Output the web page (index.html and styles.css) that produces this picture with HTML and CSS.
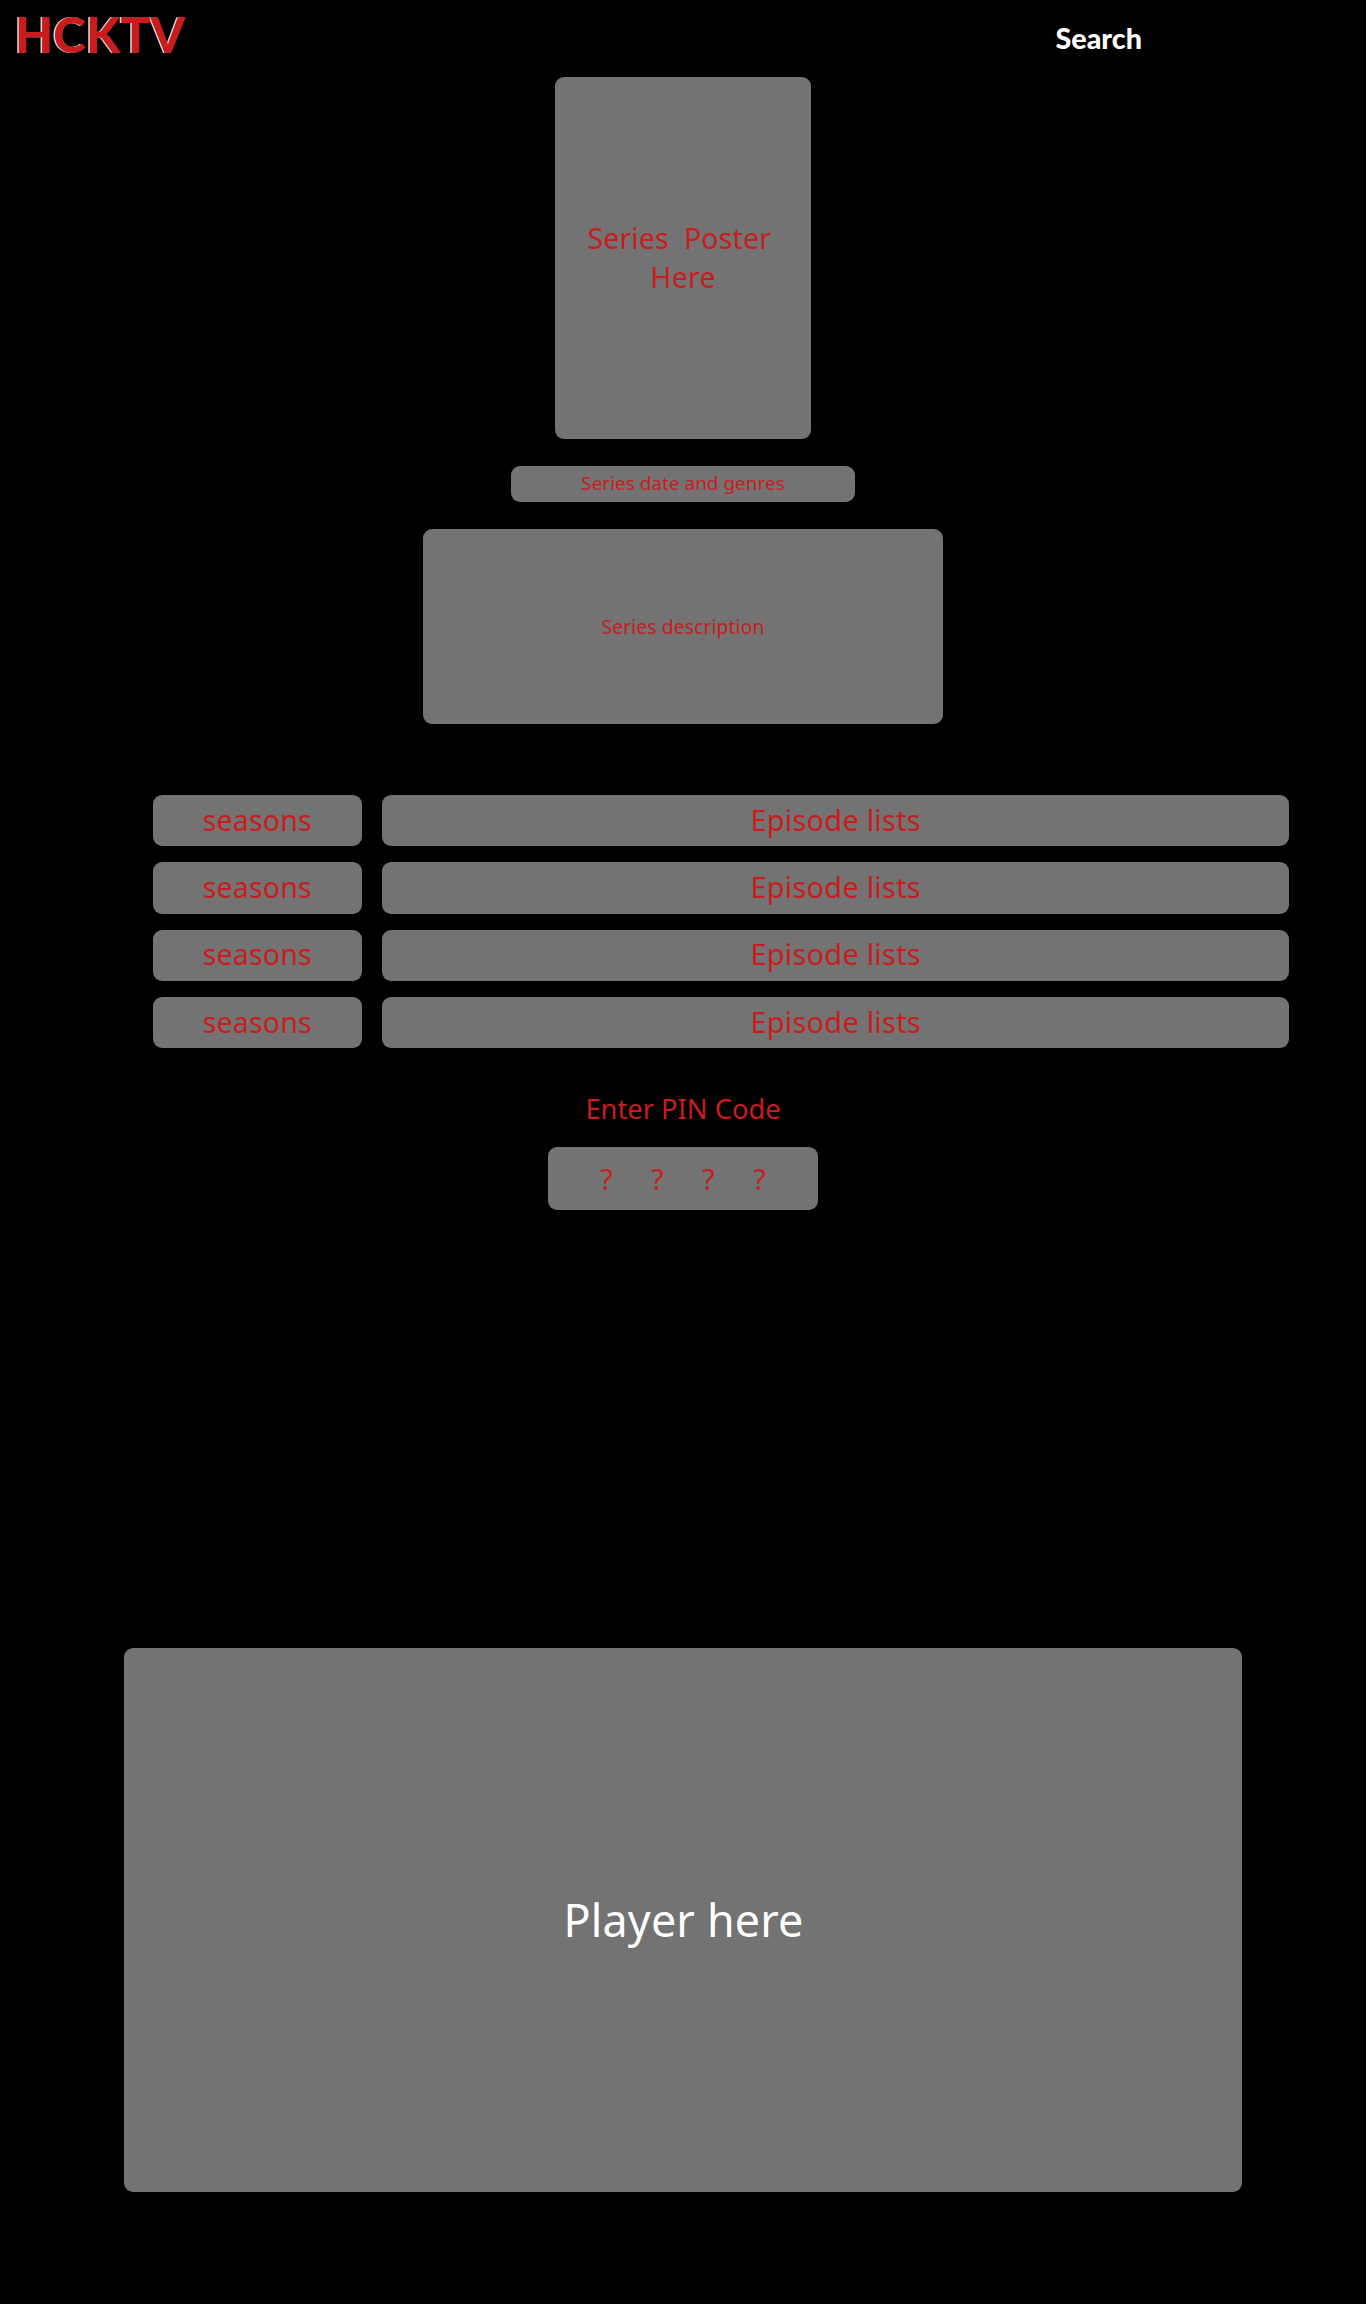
FILE: index.html
```
<!DOCTYPE html>
<html lang="en">
<head>
<meta charset="utf-8">
<title>HCKTV</title>
<link rel="stylesheet" href="styles.css">
</head>
<body>
<header class="topbar">
  <div class="logo">HCKTV</div>
  <nav class="search">Search</nav>
</header>
<main class="page">
  <section class="box poster"><p>Series&nbsp; Poster&nbsp;<br><span class="here">Here</span></p></section>
  <section class="box genres">Series date and genres</section>
  <section class="box description">Series description</section>
  <section class="seasons">
    <div class="box season">seasons</div><div class="box episodes">Episode lists</div>
    <div class="box season">seasons</div><div class="box episodes">Episode lists</div>
    <div class="box season">seasons</div><div class="box episodes">Episode lists</div>
    <div class="box season">seasons</div><div class="box episodes">Episode lists</div>
  </section>
  <h2 class="pin-title">Enter PIN Code</h2>
  <section class="box pin"><span>?</span><span>?</span><span>?</span><span>?</span></section>
  <section class="box player">Player here</section>
</main>
</body>
</html>
```
FILE: styles.css
```
* { box-sizing: border-box; }

body {
  margin: 0;
  min-height: 2304px;
  background: #000;
  color: #c91d1d;
  font-family: "Noto Sans", "Open Sans", sans-serif;
  font-size: 28.6px;
}

p, h2 { margin: 0; font-weight: 400; }

.topbar {
  display: flex;
  justify-content: space-between;
  height: 77px;
  padding: 4px 224px 0 15px;
  font-family: Lato, sans-serif;
  font-weight: 900;
}

.logo {
  font-size: 49.6px;
  line-height: 60px;
  text-shadow: -1.5px 0 0 #d9d9d9;
}

.search {
  padding-top: 16px;
  color: #fff;
  font-size: 28.7px;
  line-height: 36px;
}

.page {
  display: flex;
  flex-direction: column;
  align-items: center;
}

.box {
  display: flex;
  align-items: center;
  justify-content: center;
  border-radius: 9px;
  background: #737373;
  text-align: center;
  white-space: nowrap;
}

.poster {
  width: 256px;
  height: 361.5px;
  padding-bottom: 1.5px;
  line-height: 39.3px;
  letter-spacing: 0.1px;
}

.here { letter-spacing: 0.2px; }

.genres {
  width: 344.5px;
  height: 36px;
  margin-top: 27.5px;
  padding-bottom: 3px;
  font-size: 18.9px;
  letter-spacing: 0.03px;
}

.description {
  width: 520px;
  height: 195px;
  margin-top: 26.7px;
  font-size: 19.3px;
  letter-spacing: 0.1px;
}

.seasons {
  display: grid;
  grid-template-columns: 209.3px 907px;
  grid-auto-rows: 51.2px;
  gap: 16.2px 20.3px;
  align-self: flex-start;
  margin: 71.3px 0 0 152.6px;
}

.season { padding-bottom: 3px; letter-spacing: 0.1px; }

.episodes { padding-bottom: 3px; font-size: 29px; letter-spacing: 0.2px; }

.pin-title {
  margin-top: 41.6px;
  font-size: 27.3px;
  line-height: 38px;
}

.pin {
  gap: 38.6px;
  width: 270px;
  height: 62.5px;
  margin-top: 19.4px;
  padding-bottom: 1px;
}

.player {
  width: 1118px;
  height: 544px;
  margin-top: 438px;
  padding-left: 1px;
  color: #fff;
  font-size: 44.8px;
  letter-spacing: 0.2px;
}
```
